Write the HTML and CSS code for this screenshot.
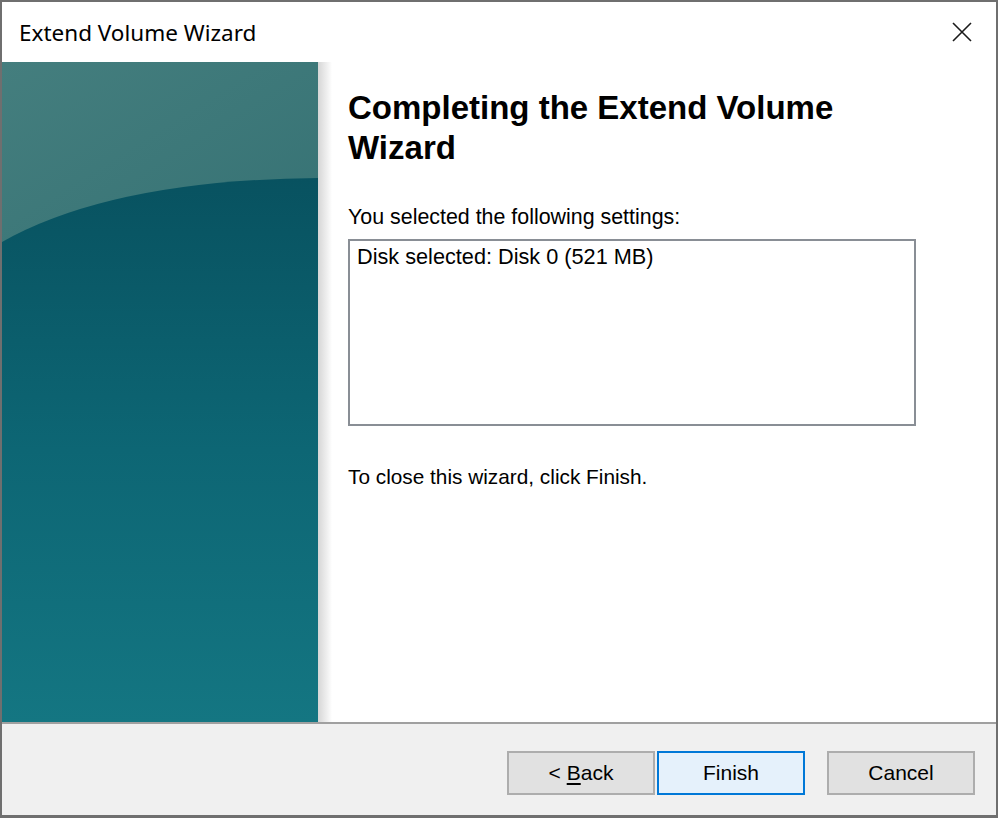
FILE: index.html
```html
<!DOCTYPE html>
<html>
<head>
<meta charset="utf-8">
<link rel="stylesheet" href="styles.css">
</head>
<body>
<div class="window">
  <div class="titlebar">
    <span class="title">Extend Volume Wizard</span>
    <svg class="close" width="20" height="20" viewBox="0 0 20 20"><path d="M1 1 L19 19 M19 1 L1 19" stroke="#1a1a1a" stroke-width="1.6" fill="none"/></svg>
  </div>
  <div class="main">
    <div class="sidebar">
      <svg width="316" height="660" viewBox="0 0 316 660" preserveAspectRatio="none">
        <defs>
          <linearGradient id="up" x1="0" y1="0" x2="0.3" y2="1">
            <stop offset="0" stop-color="#447e7e"/>
            <stop offset="1" stop-color="#2a686c"/>
          </linearGradient>
          <linearGradient id="low" x1="0" y1="0" x2="0" y2="1">
            <stop offset="0" stop-color="#085260"/>
            <stop offset="0.5" stop-color="#0d6674"/>
            <stop offset="1" stop-color="#147682"/>
          </linearGradient>
        </defs>
        <rect width="316" height="660" fill="url(#up)"/>
        <path d="M0 180 Q 110 118 316 116 L316 660 L0 660 Z" fill="url(#low)"/>
      </svg>
    </div>
    <div class="shade"></div>
    <div class="content">
      <h1 class="heading">Completing the Extend Volume Wizard</h1>
      <p class="label">You selected the following settings:</p>
      <div class="settings">Disk selected: Disk 0 (521 MB)</div>
      <p class="note">To close this wizard, click Finish.</p>
    </div>
  </div>
  <div class="footer">
    <button class="btn">&lt; <u>B</u>ack</button>
    <button class="btn primary">Finish</button>
    <button class="btn cancel">Cancel</button>
  </div>
</div>
</body>
</html>
```
FILE: styles.css
```css
* { box-sizing: border-box; }
html, body { margin: 0; padding: 0; }
body { width: 998px; height: 818px; overflow: hidden; background: #707070; font-family: "Liberation Sans", Arial, sans-serif; }
.window {
  width: 998px; height: 818px;
  border: 2px solid #6f6f6f; border-bottom-width: 3px;
  background: #ffffff;
  display: flex; flex-direction: column;
}
.titlebar {
  height: 60px; flex: none;
  display: flex; align-items: center; justify-content: space-between;
  padding: 0 24px 0 17px;
  background: #fff;
}
.title { font-family: "Noto Sans", "Open Sans", sans-serif; font-size: 22.5px; color: #000; }
.close { display: block; }
.main { height: 660px; flex: none; display: flex; }
.sidebar { width: 316px; flex: none; }
.sidebar svg { display: block; }
.shade { width: 14px; flex: none; background: linear-gradient(to right, #d6d6d6 0, #e4e4e4 35%, #f4f4f4 75%, #ffffff 100%); }
.content { flex: 1; padding: 26px 0 0 16px; }
.heading { margin: 0; font-size: 33px; font-weight: bold; line-height: 40px; color: #000; width: 560px; }
.label { margin: 37px 0 0 0; font-size: 21.4px; line-height: 24px; color: #000; }
.settings {
  margin-top: 10px; width: 568px; height: 187px;
  border: 2px solid #898e95;
  padding: 4px 0 0 7px;
  font-size: 21.7px; line-height: 24px; color: #000;
}
.note { margin: 39px 0 0 0; font-size: 20.8px; line-height: 24px; color: #000; }
.footer {
  flex: 1;
  background: #f0f0f0;
  border-top: 2px solid #a0a0a0;
  display: flex; align-items: flex-start;
  padding: 27px 0 0 505px;
}
.btn {
  width: 148px; height: 44px;
  background: #e1e1e1; border: 2px solid #adadad;
  font-family: "Liberation Sans", Arial, sans-serif; font-size: 21px; color: #000;
  padding: 0; margin: 0;
}
.btn u { text-decoration-thickness: 1.5px; text-underline-offset: 3px; }
.primary { background: #e5f1fb; border-color: #0078d7; margin-left: 2px; }
.cancel { margin-left: 22px; }
```
